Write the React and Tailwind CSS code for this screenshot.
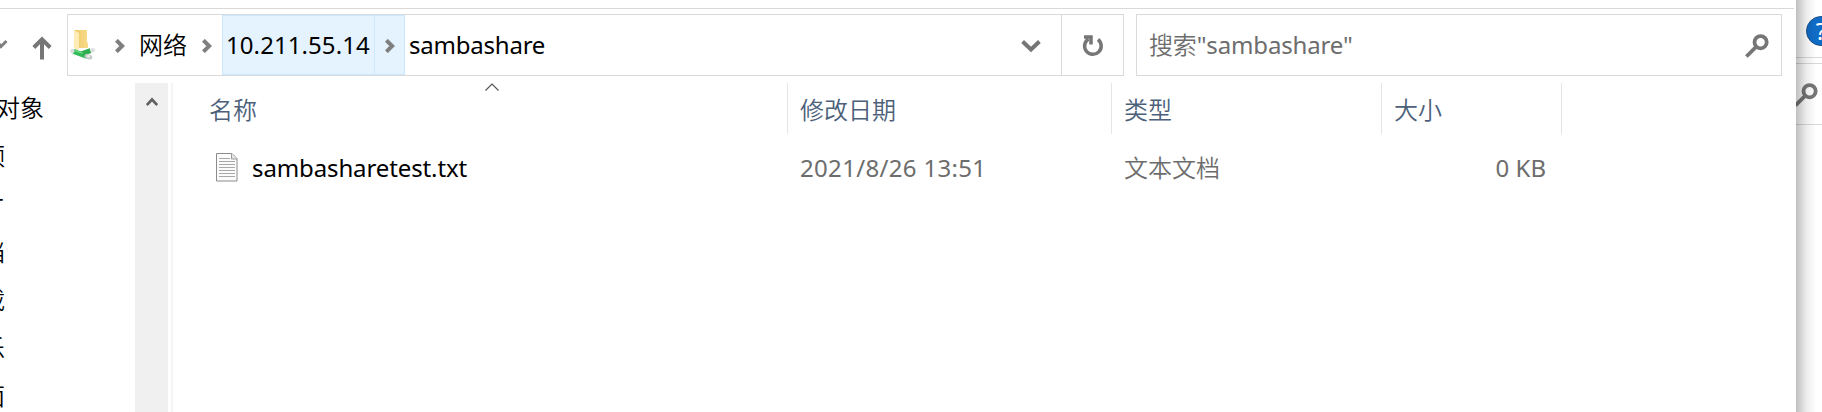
import React from "react";

const Chevron = () => (
  <svg width="10" height="14" viewBox="0 0 10 14" fill="none" stroke="#7f7f7f" strokeWidth="4">
    <path d="M1.400 1.300 7.200 7 1.400 12.700" />
  </svg>
);

const Magnifier = () => (
  <svg width="24" height="24" viewBox="0 0 24 24" fill="none" stroke="#767676">
    <circle cx="15.6" cy="8.2" r="6.1" strokeWidth="3.8" />
    <path d="M11.6 12.3 1.4 22.5" strokeWidth="3.8" />
  </svg>
);

const NetworkFolder = () => (
  <svg width="26" height="32" viewBox="0 0 26 32">
    <defs>
      <linearGradient id="folder" x1="0" x2="1">
        <stop offset="0" stopColor="#eec764" />
        <stop offset="1" stopColor="#f8dc8c" />
      </linearGradient>
    </defs>
    <path d="M4 1h13v12l1 1v5H4z" fill="url(#folder)" />
    <path d="M4 1l5 3v16.500L6 21l-2-3z" fill="#fdecb5" />
    <path d="M3.500 22.300 17 27.300" stroke="#35bb58" strokeWidth="5" />
    <path d="M11 25l9.500-3.300" stroke="#2fae4f" strokeWidth="5" />
    <path d="M5 21.600l8 2.800" stroke="#6dda86" strokeWidth="1.300" />
    <circle cx="2.300" cy="22" r="2.200" fill="#dcdfe0" />
    <circle cx="22.600" cy="21.300" r="2.300" fill="#dcdfe0" />
    <path d="M16.800 27.200l3.200 1" stroke="#c4c9ca" strokeWidth="4.600" strokeLinecap="round" />
    <circle cx="18.500" cy="27.300" r="1.400" fill="#eceeee" />
  </svg>
);

const TextFile = () => (
  <svg width="22" height="29" viewBox="0 0 22 29">
    <path d="M.5.5h15.500l5 5v22.500H.5z" fill="#fbfbfb" stroke="#8c8c8c" />
    <path d="M15.500.5v5.500h5.500" fill="#e4e4e4" stroke="#9a9a9a" />
    <path d="M3 5.500h11M3 8.500h16M3 11.500h16M3 14.500h16M3 17.500h16M3 20.500h16M3 23.500h16" stroke="#a8a8a8" />
  </svg>
);

const places = ["3D 对象", "视频", "图片", "文档", "下载", "音乐", "桌面"];

export default function App() {
  return (
    <div className="flex h-[412px] w-[1822px] overflow-hidden bg-white font-['Noto_Sans','Noto_Sans_CJK_SC',sans-serif] text-2xl leading-8 whitespace-nowrap text-black">
      <main className="flex w-[1796px] shrink-0 flex-col">
        <div className="mr-0.5 h-[9px] shrink-0 border-b border-[#d9d9d9]" />
        <header className="mt-[5px] flex h-[62px] shrink-0">
          <div className="flex w-[67px] items-center">
            <svg width="8" height="12" viewBox="0 0 8 12" fill="none" stroke="#7f7f7f" strokeWidth="3">
              <path d="M-4 1 1 7.500 6.500 2" />
            </svg>
            <svg className="mt-1.5 ml-6" width="20" height="24" viewBox="0 0 20 24" fill="none" stroke="#767676" strokeWidth="4">
              <path d="M10 23.500V3M1.800 11.500 10 3.300l8.200 8.200" />
            </svg>
          </div>
          <nav className="flex w-[1057px] border border-[#d9d9d9]">
            <div className="flex w-[154px] items-center pl-0.5">
              <NetworkFolder />
              <span className="mt-0.5 ml-[19px] flex"><Chevron /></span>
              <span className="ml-[14px] font-[350]">网络</span>
              <span className="mt-0.5 ml-[15px] flex"><Chevron /></span>
            </div>
            <div className="flex w-[153px] items-center border border-[#cce8ff] bg-[#e5f3ff] pl-[3px] tracking-[0.08px]">10.211.55.14</div>
            <div className="flex w-[30px] items-center border border-l-0 border-[#cce8ff] bg-[#e5f3ff] pt-0.5 pl-[10px]"><Chevron /></div>
            <div className="flex flex-1 items-center pl-1 tracking-[-0.22px]">sambashare</div>
            <div className="flex w-[62px] items-center justify-center pt-0.5 pl-0.5">
              <svg width="20" height="14" viewBox="0 0 20 14" fill="none" stroke="#767676" strokeWidth="4">
                <path d="M1.600 2.500 10 10.500l8.400-8" />
              </svg>
            </div>
            <div className="flex w-[62px] items-center justify-center border-l border-[#d9d9d9] pt-0.5">
              <svg width="22" height="24" viewBox="0 0 22 24" fill="none" stroke="#767676" strokeWidth="3.500">
                <path d="M16 5.500a8.300 8.300 0 1 1-9.500-.5" />
                <path d="M2 3h7v7.500" />
              </svg>
            </div>
          </nav>
          <div className="ml-3 flex w-[646px] items-center justify-between border border-[#d9d9d9] pr-3 pl-3 text-[#6d6d6d]">
            <span className="tracking-[-0.15px]"><span className="font-[350]">搜索</span>"sambashare"</span>
            <span className="mt-0.5 flex"><Magnifier /></span>
          </div>
        </header>
        <div className="mt-[7px] flex min-h-0 flex-1">
          <aside className="flex w-[135px] shrink-0 flex-col pt-px font-[350]">
            {places.map((p, i) => (
              <div key={p} className={i === 0 ? "flex h-12 w-11 shrink-0 items-center justify-end" : "flex h-12 w-[5px] shrink-0 items-center justify-end"}>{p}</div>
            ))}
          </aside>
          <div className="flex w-[33px] justify-center bg-[#f0f0f0] pt-[14px]">
            <svg width="12" height="10" viewBox="0 0 12 10" fill="none" stroke="#606060" strokeWidth="2.600">
              <path d="M.8 8 6 2.500 11.200 8" />
            </svg>
          </div>
          <div className="ml-[3px] w-0.5 bg-[#f5f5f5]" />
          <section className="flex flex-1 flex-col">
            <div className="flex h-[51px] font-[350] text-[#4c607a]">
              <div className="flex w-[615px] border-r border-[#e5e5e5] pl-9">
                <span className="w-[276px] leading-[53px]">名称</span>
                <svg width="14" height="8" viewBox="0 0 14 8" fill="none" stroke="#555" strokeWidth="1.200">
                  <path d="M.5 7.500 7 1l6.500 6.500" />
                </svg>
              </div>
              <div className="w-[324px] border-r border-[#e5e5e5] pl-3 leading-[53px]">修改日期</div>
              <div className="w-[270px] border-r border-[#e5e5e5] pl-3 leading-[53px]">类型</div>
              <div className="w-[180px] border-r border-[#e5e5e5] pl-3 leading-[53px]">大小</div>
            </div>
            <div className="mt-[10px] flex h-12 items-center text-[#6d6d6d]">
              <div className="flex w-[615px] items-center pl-[43px] text-black">
                <span className="-mt-0.5 flex"><TextFile /></span>
                <span className="ml-[14px] tracking-[-0.12px]">sambasharetest.txt</span>
              </div>
              <div className="w-[324px] pl-3 tracking-[0.32px]">2021/8/26 13:51</div>
              <div className="w-[270px] pl-3 font-[350]">文本文档</div>
              <div className="w-[180px] pr-4 text-right">0 KB</div>
            </div>
          </section>
        </div>
      </main>
      <aside className="relative flex w-[26px] shrink-0 flex-col overflow-hidden">
        <div className="flex h-[58px] border-b border-[#d9d9d9] pt-4 pl-[10px]">
          <div className="flex size-[30px] shrink-0 items-center justify-center rounded-full border border-[#1c4f86] bg-[#0f6cc6] text-2xl text-white">?</div>
        </div>
        <div className="mt-[5px] flex h-[62px] items-center border-y border-[#d9d9d9]">
          <span className="mt-0.5 -ml-0.5 flex shrink-0"><Magnifier /></span>
        </div>
        <div className="absolute inset-y-0 left-0 w-5 bg-linear-to-r from-black/25 via-black/8 to-transparent" />
      </aside>
    </div>
  );
}
